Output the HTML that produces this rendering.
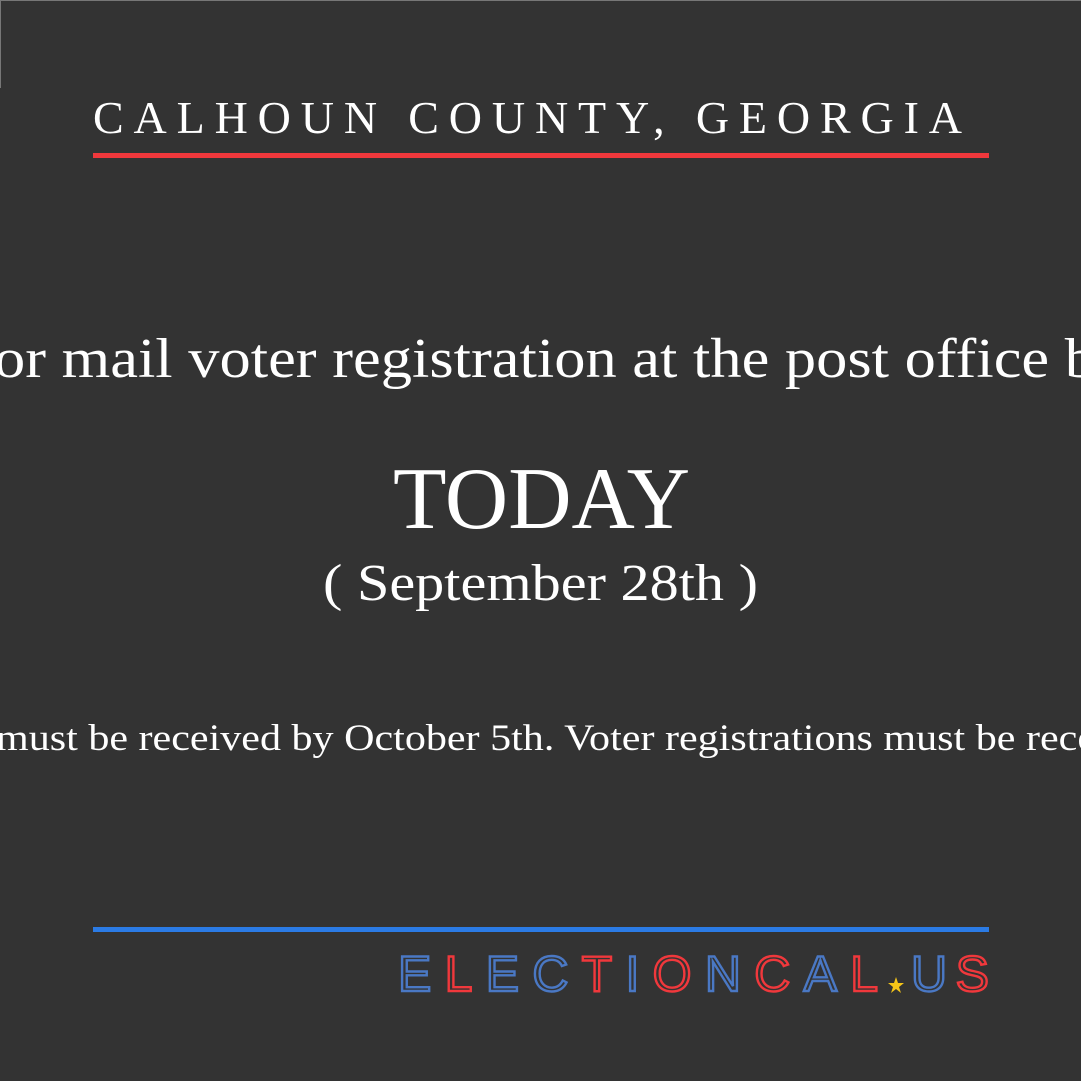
<!DOCTYPE html>
<html><head><style>
html,body{margin:0;padding:0;background:#333;}
svg{display:block}
</style></head><body>
<svg width="1081" height="1081" viewBox="0 0 1081 1081" xmlns="http://www.w3.org/2000/svg">
<rect width="1081" height="1081" fill="#333"/>
<rect x="0" y="0" width="1081" height="1" fill="#777"/>
<rect x="0" y="0" width="1" height="88" fill="#777"/>
<text x="93" y="133" font-family="Liberation Serif, serif" font-size="46" fill="#fff" textLength="869" lengthAdjust="spacing">CALHOUN COUNTY, GEORGIA</text>
<rect x="93" y="153" width="896" height="5" fill="#f0383c"/>
<text x="-6" y="377" font-family="Liberation Serif, serif" font-size="56" fill="#fff" textLength="1102" lengthAdjust="spacingAndGlyphs">or mail voter registration at the post office b</text>
<text x="393" y="528" font-family="Liberation Serif, serif" font-size="88" fill="#fff" textLength="297" lengthAdjust="spacingAndGlyphs">TODAY</text>
<text x="323" y="600" font-family="Liberation Serif, serif" font-size="52" fill="#fff" textLength="435" lengthAdjust="spacingAndGlyphs">( September 28th )</text>
<text x="-4" y="750" font-family="Liberation Serif, serif" font-size="37" fill="#fff" textLength="1100" lengthAdjust="spacingAndGlyphs">must be received by October 5th. Voter registrations must be rece</text>
<rect x="93" y="927" width="896" height="5" fill="#2b7be5"/>
<g font-family="Liberation Sans, sans-serif" font-size="50" fill="none" stroke-width="2.4">
<text x="398" y="991" textLength="480" lengthAdjust="spacing"><tspan stroke="#4a78c4">E</tspan><tspan stroke="#f0383c">L</tspan><tspan stroke="#4a78c4">E</tspan><tspan stroke="#4a78c4">C</tspan><tspan stroke="#f0383c">T</tspan><tspan stroke="#4a78c4">I</tspan><tspan stroke="#f0383c">O</tspan><tspan stroke="#4a78c4">N</tspan><tspan stroke="#f0383c">C</tspan><tspan stroke="#4a78c4">A</tspan><tspan stroke="#f0383c">L</tspan></text>
<text x="911" y="991" textLength="78" lengthAdjust="spacing"><tspan stroke="#4a78c4">U</tspan><tspan stroke="#f0383c">S</tspan></text>
</g>
<polygon points="896,977 898,983 904,983 899,987 901,993 896,989 891,993 893,987 888,983 894,983" fill="#f5c518"/>
</svg>
</body></html>
